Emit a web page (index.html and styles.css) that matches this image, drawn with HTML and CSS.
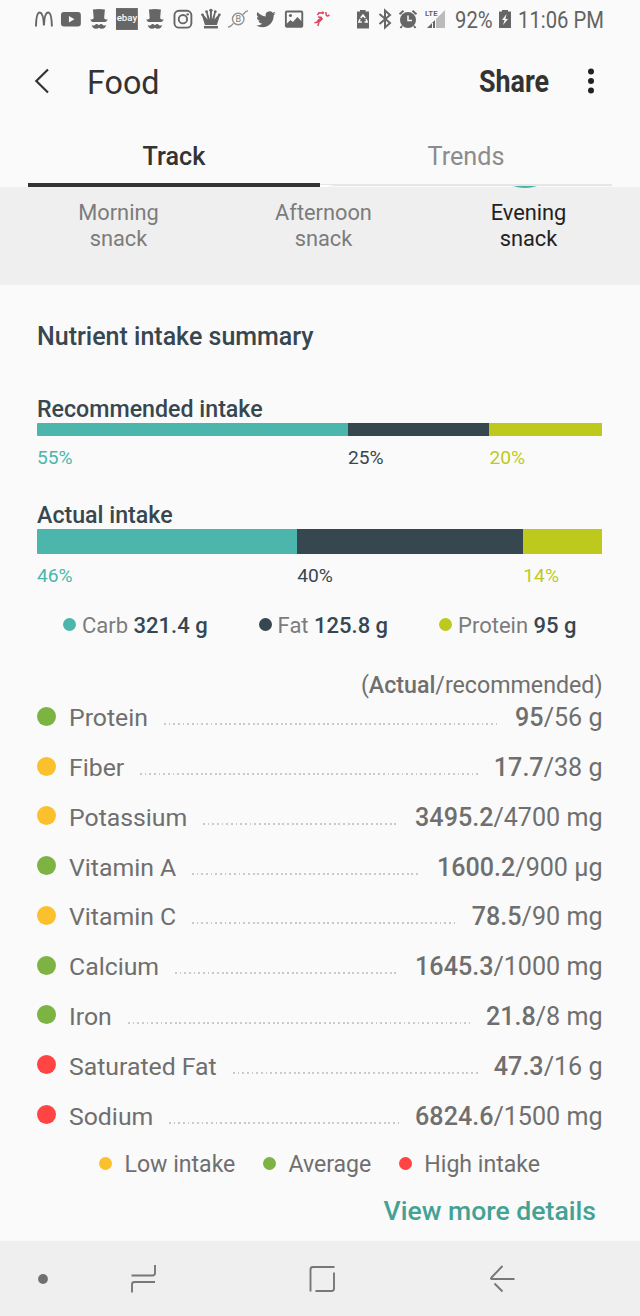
FILE: index.html
```
<!DOCTYPE html>
<html lang="en">
<head>
  <meta charset="UTF-8" />
  <meta name="viewport" content="width=device-width, initial-scale=1.0"/>
  <title>Food</title>
  <link rel="stylesheet" href="styles.css">
</head>
<body>
  <div class="status-bar">
    <div class="notifications">
      <svg viewBox="0 0 28 28"><path d="M6 21.5C6.200 12 7.500 7.500 9.700 7.500c2.300 0 3.900 5 4.300 13 .4-8 2-13 4.300-13 2.200 0 3.500 4.500 3.700 14" fill="none" stroke="#666" stroke-width="1.900"/></svg>
      <svg viewBox="0 0 28 28"><rect x="4" y="7" width="20" height="14.500" rx="3" fill="#666"/><path d="M12 11l5.500 3.200-5.500 3.200z" fill="#fafafa"/></svg>
      <svg viewBox="0 0 28 28"><use href="#hat"/></svg>
      <svg viewBox="0 0 28 28"><rect x="3" y="3" width="22" height="22" fill="#666"/><text x="14" y="16.500" text-anchor="middle" textLength="20.500" lengthAdjust="spacingAndGlyphs" class="ebay">ebay</text></svg>
      <svg viewBox="0 0 28 28"><use href="#hat"/></svg>
      <svg viewBox="0 0 28 28"><g fill="none" stroke="#666" stroke-width="1.900"><rect x="5.500" y="5.700" width="17" height="17" rx="4.500"/><circle cx="14" cy="14.200" r="4.200"/></g><circle cx="18.800" cy="9.300" r="1.200" fill="#666"/></svg>
      <svg viewBox="0 0 28 28"><g fill="#666"><path d="M8 20L4.800 10l1.600-.6 4.200 5L9 7l1.500-.4L13 14.500V5h2v9.500l2.500-7.900L19 7l-1.600 7.400 4.200-5 1.600.6L20 20z"/><rect x="7" y="21" width="14" height="2.500"/><circle cx="5.500" cy="9.800" r="1.400"/><circle cx="9.600" cy="6.600" r="1.400"/><circle cx="14" cy="5.300" r="1.700"/><circle cx="18.400" cy="6.600" r="1.400"/><circle cx="22.500" cy="9.800" r="1.400"/></g></svg>
      <svg viewBox="0 0 28 28"><g fill="none" stroke="#929292" stroke-width="1.400"><circle cx="14.300" cy="14" r="5.800"/><path d="M4 22.500l3-1.500 2.500-2.600M19 9.500l2.500-2.600L24 5.500"/></g><text x="14.300" y="17.200" text-anchor="middle" class="coin">B</text></svg>
      <svg viewBox="0 0 28 28"><path transform="translate(4.200 4.500) scale(.82)" fill="#666" d="M23.950 4.600a10 10 0 0 1-2.800.8 5 5 0 0 0 2.100-2.700 10 10 0 0 1-3.100 1.200 4.900 4.900 0 0 0-8.400 4.500A14 14 0 0 1 1.700 3.150a4.900 4.900 0 0 0 1.500 6.600 4.900 4.900 0 0 1-2.200-.6 4.900 4.900 0 0 0 4 4.800 5 5 0 0 1-2.200.1 4.900 4.900 0 0 0 4.600 3.400A9.900 9.900 0 0 1 0 19.500a14 14 0 0 0 7.500 2.200c9.100 0 14-7.500 14-14v-.6a10 10 0 0 0 2.450-2.500z"/></svg>
      <svg viewBox="0 0 28 28"><rect x="5.900" y="6.400" width="16.500" height="15.500" rx="1" fill="none" stroke="#666" stroke-width="1.900"/><circle cx="10.500" cy="10.500" r="1.600" fill="#666"/><path d="M6 19.500l4.500-4.500 2.500 2 4.500-5 5 5v5H6z" fill="#666"/></svg>
      <svg viewBox="0 0 28 28"><g fill="none" stroke="#dc4660" stroke-width="1.500"><path d="M9.500 10L11 7.700l2.800.3M6.500 17.800l4-.8 4-3.500M11 18l-1.200 3M14 12.500l-4-.5M18 7l.3 3q.7 2 3.200-.2"/></g><path d="M10 14.500l3.500-2.500 1.500 1.800-3.500 4-3-1.300z" fill="#dc4660"/><circle cx="14.800" cy="7.800" r="1.400" fill="#dc4660"/></svg>
    </div>
    <div class="system">
      <svg class="sys-recycle" viewBox="0 0 14 28"><path d="M1 6.500h3V5h5.500v1.500H13v17H1z" fill="#666"/><path d="M4.700 13L7 10l2.300 3M10 14l1.200 3H8.500M5.800 17H2.900L4 14" fill="none" stroke="#fafafa" stroke-width="1.500"/></svg>
      <svg class="sys-bt" viewBox="0 0 14 28"><path d="M1.500 9l10.500 9-5 4.500v-17L12 10 1.500 19" fill="none" stroke="#666" stroke-width="2"/></svg>
      <svg class="sys-alarm" viewBox="0 0 20 28"><circle cx="10" cy="15" r="8" fill="#666"/><path d="M1.500 9.200l4-3.400M18.500 9.200l-4-3.400M4 21l-1.500 2M16 21l1.500 2" stroke="#666" stroke-width="2"/><path d="M10 10.500V15.500h4" fill="none" stroke="#fafafa" stroke-width="1.500"/></svg>
      <svg class="sys-signal" viewBox="0 0 22 28"><path d="M20 5v18H11V14z" fill="#bbb"/><path d="M2 23l8-8v8H8V18H7v5z" fill="#666"/><text x="0" y="10.500" class="lte" textLength="12.500" lengthAdjust="spacingAndGlyphs">LTE</text></svg>
      <span class="percent">92%</span>
      <svg class="sys-charge" viewBox="0 0 14 28"><path d="M1 6.500h3V5h6v1.500h3V23H1z" fill="#666"/><path d="M8.500 9L4 15h2.600L5 20l5-6H7.400z" fill="#fafafa"/></svg>
      <span class="clock">11:06 PM</span>
    </div>
    <svg class="defs" width="0" height="0">
      <defs>
        <g id="hat" fill="#666"><path d="M8 4.500q6-1 12 0l-.8 9.500H8.800z"/><path d="M5.200 14.200q2 1 3.300-.7h11q1.300 1.700 3.300.7-1 3.300-4.800 2.800H10q-3.800.5-4.800-2.800z"/><path d="M14 20.200q2.600-2.300 4.200.1 1.500.9 3-.5-.6 4.300-4.500 4.100-1.800 0-2.700-1.100-.9 1.100-2.700 1.100-3.900.2-4.500-4.100 1.500 1.400 3 .5 1.600-2.400 4.200-.1z"/></g>
      </defs>
    </svg>
  </div>

  <header class="app-bar">
    <svg class="back" viewBox="0 0 16 26"><path d="M14 1.500L2.300 13 14 24.500" fill="none" stroke="#333" stroke-width="2.200"/></svg>
    <h1>Food</h1>
    <span class="share">Share</span>
    <svg class="more" viewBox="0 0 8 28" fill="#222"><circle cx="4" cy="4.400" r="3"/><circle cx="4" cy="14" r="3"/><circle cx="4" cy="23.600" r="3"/></svg>
  </header>

  <nav class="tabs">
    <div class="tab active">Track</div>
    <div class="tab">Trends</div>
    <svg class="ring-edge" viewBox="0 0 30 3"><path d="M3 0q12 4 24 0z" fill="#45b3a5"/></svg>
    <svg class="pointer-edge" viewBox="0 0 14 2"><path d="M0 0h14q-7 2-14 2z" fill="#fff"/></svg>
  </nav>

  <section class="meals">
    <div class="meal">Morning<br>snack</div>
    <div class="meal">Afternoon<br>snack</div>
    <div class="meal selected">Evening<br>snack</div>
  </section>

  <main class="summary">
    <h2>Nutrient intake summary</h2>

    <h3 class="recommended-title">Recommended intake</h3>
    <div class="bar thin">
      <div class="carb" style="width:55%"></div>
      <div class="fat" style="width:25%"></div>
      <div class="protein" style="width:20%"></div>
    </div>
    <div class="bar-labels">
      <span class="carb-text" style="width:55%">55%</span>
      <span class="fat-text" style="width:25%">25%</span>
      <span class="protein-text" style="width:20%">20%</span>
    </div>

    <h3 class="actual-title">Actual intake</h3>
    <div class="bar thick">
      <div class="carb" style="width:46%"></div>
      <div class="fat" style="width:40%"></div>
      <div class="protein" style="width:14%"></div>
    </div>
    <div class="bar-labels">
      <span class="carb-text" style="width:46%">46%</span>
      <span class="fat-text" style="width:40%">40%</span>
      <span class="protein-text" style="width:14%">14%</span>
    </div>

    <div class="macros">
      <div class="macro"><i class="dot carb"></i>Carb <b>321.4 g</b></div>
      <div class="macro"><i class="dot fat"></i>Fat <b>125.8 g</b></div>
      <div class="macro"><i class="dot protein"></i>Protein <b>95 g</b></div>
    </div>

    <div class="hint">(<b>Actual</b>/recommended)</div>
    <ul class="nutrients">
      <li><i class="level average"></i>Protein<span class="leader"></span><span class="amount"><b>95</b>/56 g</span></li>
      <li><i class="level low"></i>Fiber<span class="leader"></span><span class="amount"><b>17.7</b>/38 g</span></li>
      <li><i class="level low"></i>Potassium<span class="leader"></span><span class="amount"><b>3495.2</b>/4700 mg</span></li>
      <li><i class="level average"></i>Vitamin A<span class="leader"></span><span class="amount"><b>1600.2</b>/900 µg</span></li>
      <li><i class="level low"></i>Vitamin C<span class="leader"></span><span class="amount"><b>78.5</b>/90 mg</span></li>
      <li><i class="level average"></i>Calcium<span class="leader"></span><span class="amount"><b>1645.3</b>/1000 mg</span></li>
      <li><i class="level average"></i>Iron<span class="leader"></span><span class="amount"><b>21.8</b>/8 mg</span></li>
      <li><i class="level high"></i>Saturated Fat<span class="leader"></span><span class="amount"><b>47.3</b>/16 g</span></li>
      <li><i class="level high"></i>Sodium<span class="leader"></span><span class="amount"><b>6824.6</b>/1500 mg</span></li>
    </ul>

    <div class="legend">
      <div><i class="dot low"></i>Low intake</div>
      <div><i class="dot average"></i>Average</div>
      <div><i class="dot high"></i>High intake</div>
    </div>
    <a class="details">View more details</a>
  </main>

  <footer class="nav-bar">
    <svg class="nav-dot" viewBox="0 0 12 12"><circle cx="6" cy="6" r="4.900" fill="#707070"/></svg>
    <svg class="nav-recents" viewBox="0 0 28 30"><path d="M25 1v8q0 2.500-2.500 2.500H1.500M2 28.500v-8Q2 18 4.500 18H25" fill="none" stroke="#777" stroke-width="1.900"/></svg>
    <svg class="nav-home" viewBox="0 0 28 28"><path d="M2.500 26.500V4.500Q2.500 2 5 2H26.500M26 7.500v16q0 2.500-2.500 2.500H7.500" fill="none" stroke="#777" stroke-width="1.900"/></svg>
    <svg class="nav-back" viewBox="0 0 28 28"><path d="M13.500 1L2.500 12.500Q1.200 14 3 14H25.500M5.500 18.500l8 8" fill="none" stroke="#777" stroke-width="1.900"/></svg>
  </footer>
</body>
</html>
```
FILE: styles.css
```
* {
  box-sizing: border-box;
}
body {
  margin: 0;
  width: 640px;
  height: 1316px;
  display: flex;
  flex-direction: column;
  overflow: hidden;
  font-family: Roboto, sans-serif;
  background: #fafafa;
  color: #6f6f6f;
}
h1, h2, h3, ul {
  margin: 0;
  padding: 0;
}
b {
  font-weight: 500;
}
svg {
  display: block;
  flex: none;
}

/* status bar */
.status-bar {
  height: 40px;
  display: flex;
  padding: 5px 0 0 29.5px;
  color: #636363;
}
.notifications {
  display: flex;
  width: 326.5px;
}
.notifications svg {
  width: 27.850px;
  height: 28px;
}
.system {
  display: flex;
}
.system svg {
  height: 28px;
}
.defs {
  width: 0;
}
.ebay {
  font: 500 10px Roboto, sans-serif;
  fill: #fafafa;
}
.coin {
  font: 500 9px Roboto, sans-serif;
  fill: #929292;
}
.lte {
  font: 700 8px Roboto, sans-serif;
  fill: #666;
}
.sys-recycle {
  width: 14px;
}
.sys-bt {
  width: 14px;
  margin-left: 8px;
}
.sys-alarm {
  width: 20px;
  margin-left: 6px;
}
.sys-signal {
  width: 22px;
  margin-left: 7px;
}
.percent, .clock {
  font-size: 23px;
  line-height: 31px;
  white-space: nowrap;
  transform: scaleX(0.88);
  transform-origin: left;
}
.percent {
  width: 37px;
  margin-left: 8px;
}
.sys-charge {
  width: 14px;
  margin-left: 6px;
}
.clock {
  margin-left: 6px;
}

/* app bar */
.app-bar {
  height: 84px;
  display: flex;
  align-items: center;
  padding: 0 45px 0 34px;
  color: #333;
}
.back {
  width: 16px;
  height: 26px;
  margin-bottom: 2px;
}
h1 {
  flex: 1;
  margin-left: 37px;
  padding-top: 1px;
  font-size: 32.300px;
  font-weight: 400;
}
.share {
  width: 70px;
  font-size: 32px;
  font-weight: 700;
  line-height: 36px;
  margin-bottom: 2px;
  transform: scaleX(0.84);
  transform-origin: left;
}
.more {
  width: 8px;
  height: 28px;
  margin-left: 38.500px;
  margin-bottom: 2px;
}

/* tabs */
.tabs {
  position: relative;
  height: 63px;
  display: flex;
  padding: 0 28px;
}
.tab {
  flex: 1;
  height: 62px;
  border-bottom: 2px solid #e6e6e6;
  text-align: center;
  font-size: 25.200px;
  line-height: 65px;
  color: #8c8c8c;
}
.tab.active {
  height: 63px;
  border-bottom: 4px solid #333;
  color: #333;
  font-weight: 500;
}
.ring-edge {
  position: absolute;
  left: 510px;
  top: 62px;
  width: 30px;
  height: 3px;
}
.pointer-edge {
  position: absolute;
  left: 320px;
  top: 61px;
  width: 14px;
  height: 2px;
}

/* meals */
.meals {
  height: 98px;
  display: flex;
  justify-content: center;
  padding: 13px 0 0 7px;
  background: #efefef;
}
.meal {
  width: 205px;
  text-align: center;
  font-size: 21.800px;
  line-height: 25.500px;
  color: #7c7c7c;
}
.meal.selected {
  color: #222;
}

/* summary */
.summary {
  height: 956px;
  display: flex;
  flex-direction: column;
  padding: 0 37.500px 0 37px;
}
h2 {
  margin-top: 35px;
  font-size: 25px;
  font-weight: 500;
  line-height: 34px;
  color: #37474f;
}
h3 {
  font-size: 23.200px;
  font-weight: 500;
  line-height: 28px;
  color: #37474f;
}
.recommended-title {
  margin-top: 41px;
}
.actual-title {
  margin-top: 30px;
}
.bar {
  display: flex;
  border-radius: 1px;
  overflow: hidden;
}
.bar.thin {
  height: 13px;
}
.bar.thick {
  height: 25px;
}
.bar-labels {
  display: flex;
  margin-top: 9px;
  font-size: 19.200px;
  line-height: 26px;
}
.carb {
  background: #4db6ac;
}
.fat {
  background: #37474f;
}
.protein {
  background: #bdca1d;
}
.carb-text {
  color: #4db6ac;
}
.fat-text {
  color: #37474f;
}
.protein-text {
  color: #bdca1d;
}
.macros {
  display: flex;
  justify-content: space-between;
  margin-top: 22px;
  padding: 0 26px;
  font-size: 22px;
  line-height: 30px;
  color: #7c7c7c;
}
.macro {
  white-space: nowrap;
}
.macro b {
  color: #37474f;
}
.dot {
  display: inline-block;
  width: 13px;
  height: 13px;
  margin-right: 6px;
  border-radius: 50%;
  vertical-align: 2px;
}
.hint {
  margin-top: 29px;
  text-align: right;
  font-size: 23.200px;
  line-height: 30px;
}
.nutrients {
  list-style: none;
  margin-top: -7px;
}
.nutrients li {
  display: flex;
  align-items: center;
  height: 49.770px;
  font-size: 24.800px;
}
.amount {
  font-size: 25.100px;
}
.level {
  width: 19px;
  height: 19px;
  margin: 0 13px 3px 0;
  border-radius: 50%;
}
.leader {
  flex: 1;
  height: 2px;
  margin: 13px 16px 0;
  background: repeating-linear-gradient(90deg, #cacaca 0 1.800px, transparent 1.800px 4.670px);
}
.average {
  background: #7cb342;
}
.low {
  background: #fbc02d;
}
.high {
  background: #ff4444;
}
.legend {
  display: flex;
  justify-content: center;
  gap: 28px;
  margin-top: 9px;
  font-size: 23.100px;
  line-height: 30px;
}
.legend .dot {
  margin-right: 12px;
}
.details {
  margin: 15px 6.500px 0 0;
  text-align: right;
  font-size: 26.600px;
  font-weight: 500;
  line-height: 32px;
  color: #43a294;
}

/* navigation bar */
.nav-bar {
  height: 75px;
  display: flex;
  align-items: center;
  padding-left: 37px;
  background: #efefef;
}
.nav-dot {
  width: 12px;
  height: 12px;
}
.nav-recents {
  width: 28px;
  height: 30px;
  margin-left: 81px;
}
.nav-home {
  width: 28px;
  height: 28px;
  margin-left: 150px;
}
.nav-back {
  width: 28px;
  height: 28px;
  margin-left: 153px;
}
```
